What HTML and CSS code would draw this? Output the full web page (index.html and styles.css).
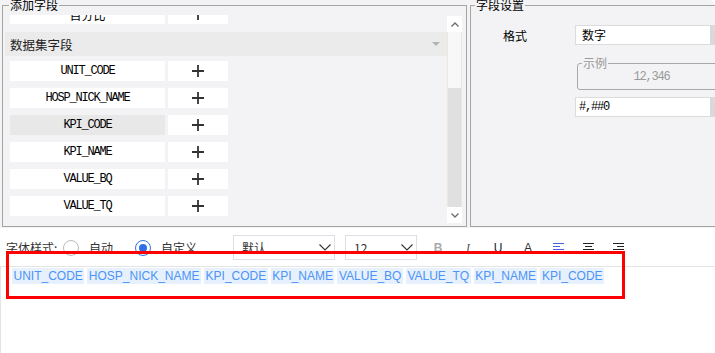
FILE: index.html
```html
<!DOCTYPE html>
<html lang="zh-CN">
<head>
    <meta charset="UTF-8">
    <meta name="viewport" content="width=device-width, initial-scale=1.0">
    <title>字段设置</title>
    <link rel="stylesheet" href="styles.css">
</head>
<body>
    <div class="top">
        <fieldset class="panel panel-fields">
            <legend>添加字段</legend>
            <div class="list">
                <div class="list-view">
                    <div class="list-inner">
                        <div class="field-row">
                            <span class="field-name field-name-cjk">百分比</span>
                            <span class="field-add"><svg width="12" height="12" viewBox="0 0 12 12"><path d="M6 0V12M0 6H12" stroke="#333" stroke-width="1.8"/></svg></span>
                        </div>
                        <div class="group-head">数据集字段<span class="caret"></span></div>
                        <div class="field-row">
                            <span class="field-name">UNIT_CODE</span>
                            <span class="field-add"><svg width="12" height="12" viewBox="0 0 12 12"><path d="M6 0V12M0 6H12" stroke="#333" stroke-width="1.8"/></svg></span>
                        </div>
                        <div class="field-row">
                            <span class="field-name">HOSP_NICK_NAME</span>
                            <span class="field-add"><svg width="12" height="12" viewBox="0 0 12 12"><path d="M6 0V12M0 6H12" stroke="#333" stroke-width="1.8"/></svg></span>
                        </div>
                        <div class="field-row is-hover">
                            <span class="field-name">KPI_CODE</span>
                            <span class="field-add"><svg width="12" height="12" viewBox="0 0 12 12"><path d="M6 0V12M0 6H12" stroke="#333" stroke-width="1.8"/></svg></span>
                        </div>
                        <div class="field-row">
                            <span class="field-name">KPI_NAME</span>
                            <span class="field-add"><svg width="12" height="12" viewBox="0 0 12 12"><path d="M6 0V12M0 6H12" stroke="#333" stroke-width="1.8"/></svg></span>
                        </div>
                        <div class="field-row">
                            <span class="field-name">VALUE_BQ</span>
                            <span class="field-add"><svg width="12" height="12" viewBox="0 0 12 12"><path d="M6 0V12M0 6H12" stroke="#333" stroke-width="1.8"/></svg></span>
                        </div>
                        <div class="field-row">
                            <span class="field-name">VALUE_TQ</span>
                            <span class="field-add"><svg width="12" height="12" viewBox="0 0 12 12"><path d="M6 0V12M0 6H12" stroke="#333" stroke-width="1.8"/></svg></span>
                        </div>
                    </div>
                </div>
                <div class="scrollbar">
                    <div class="sb-btn"><svg width="8" height="5" viewBox="0 0 8 5"><path d="M0.5 4.5L4 1L7.5 4.5" fill="none" stroke="#707070" stroke-width="1.4"/></svg></div>
                    <div class="sb-track"><div class="sb-thumb"></div></div>
                    <div class="sb-btn"><svg width="8" height="5" viewBox="0 0 8 5"><path d="M0.5 0.5L4 4L7.5 0.5" fill="none" stroke="#707070" stroke-width="1.4"/></svg></div>
                </div>
            </div>
        </fieldset>

        <fieldset class="panel panel-settings">
            <legend>字段设置</legend>
            <div class="setting-row">
                <label class="setting-label">格式</label>
                <div class="combo">
                    <span class="combo-value">数字</span>
                    <span class="combo-btn"></span>
                </div>
            </div>
            <fieldset class="sample">
                <legend>示例</legend>
                <div class="sample-value">12,346</div>
            </fieldset>
            <div class="combo pattern">
                <span class="combo-value mono">#,##0</span>
                <span class="combo-btn"></span>
            </div>
        </fieldset>
    </div>

    <div class="toolbar">
        <span class="tb-label">字体样式:</span>
        <span class="radio"></span>
        <span class="radio-text">自动</span>
        <span class="radio is-checked"></span>
        <span class="radio-text">自定义</span>
        <div class="tb-select tb-select-font">
            <span>默认</span>
            <svg width="12" height="7" viewBox="0 0 12 7"><path d="M0.5 0.5L6 6L11.5 0.5" fill="none" stroke="#333" stroke-width="1.1"/></svg>
        </div>
        <div class="tb-select tb-select-size">
            <span>12</span>
            <svg width="12" height="7" viewBox="0 0 12 7"><path d="M0.5 0.5L6 6L11.5 0.5" fill="none" stroke="#333" stroke-width="1.1"/></svg>
        </div>
        <span class="tb-icon icon-bold">B</span>
        <span class="tb-icon icon-italic">I</span>
        <span class="tb-icon icon-underline">U</span>
        <span class="tb-icon icon-color">A</span>
        <span class="tb-icon"><svg width="11" height="11" viewBox="0 0 11 11"><path d="M0 1.5H11M0 4.5H7M0 7.5H11M0 10.5H7" stroke="#4a5ee0" stroke-width="1.2"/></svg></span>
        <span class="tb-icon"><svg width="11" height="11" viewBox="0 0 11 11"><path d="M0 1.5H11M2 4.5H9M0 7.5H11M2 10.5H9" stroke="#222" stroke-width="1.2"/></svg></span>
        <span class="tb-icon"><svg width="11" height="11" viewBox="0 0 11 11"><path d="M0 1.5H11M4 4.5H11M0 7.5H11M4 10.5H11" stroke="#222" stroke-width="1.2"/></svg></span>
    </div>

    <div class="editor">
        <span class="tag">UNIT_CODE</span>
        <span class="tag">HOSP_NICK_NAME</span>
        <span class="tag">KPI_CODE</span>
        <span class="tag">KPI_NAME</span>
        <span class="tag">VALUE_BQ</span>
        <span class="tag">VALUE_TQ</span>
        <span class="tag">KPI_NAME</span>
        <span class="tag">KPI_CODE</span>
    </div>

    <div class="highlight"></div>
</body>
</html>
```

FILE: styles.css
```css
* {
    margin: 0;
    padding: 0;
    box-sizing: border-box;
}

body {
    position: relative;
    width: 715px;
    height: 353px;
    overflow: hidden;
    background-color: #fff;
    font-family: "Noto Sans CJK SC", "Liberation Sans", sans-serif;
    font-size: 12px;
    color: #000;
}

.mono {
    font-family: "Liberation Mono", "DejaVu Sans Mono", monospace;
    font-size: 12px;
    letter-spacing: -1.2px;
}

/* top area with two panels */
.top {
    display: flex;
    align-items: flex-start;
    gap: 3px;
    height: 228px;
    padding-left: 2px;
    background-color: #f3f3f5;
    overflow: hidden;
    border-top-right-radius: 6px;
}

.panel {
    flex-shrink: 0;
    min-width: 0;
    border: 1px solid #a5a5a0;
}

.panel > legend {
    margin-left: 4px;
    padding: 0 1px;
    font-size: 12px;
    line-height: 10px;
}

.panel-fields {
    width: 465px;
    padding: 5px 4px 3px 2px;
}

.list {
    display: flex;
    height: 208px;
}

.list-view {
    width: 442px;
    overflow: hidden;
}

.list-inner {
    margin-top: -11px;
}

.field-row {
    display: flex;
    gap: 3px;
    padding-left: 5px;
    margin-bottom: 7px;
}

.field-name {
    display: flex;
    align-items: center;
    justify-content: center;
    width: 155px;
    height: 20px;
    background-color: #fff;
    font-family: "Liberation Mono", "DejaVu Sans Mono", monospace;
    font-size: 12px;
    letter-spacing: -1.2px;
    color: #000;
}

.field-name-cjk {
    font-family: "Noto Sans CJK SC", sans-serif;
    letter-spacing: 0;
}

.is-hover .field-name {
    background-color: #e8e8e8;
}

.field-add {
    display: flex;
    align-items: center;
    justify-content: center;
    width: 60px;
    height: 20px;
    background-color: #fff;
}

.group-head {
    display: flex;
    align-items: center;
    height: 24px;
    margin: 8px 0 5px;
    padding: 0 7px 0 5px;
    background-color: #ebebeb;
    font-size: 12.5px;
    color: #222;
}

.caret {
    margin-left: auto;
    border-left: 4px solid transparent;
    border-right: 4px solid transparent;
    border-top: 4px solid #b3b3b3;
}

.scrollbar {
    display: flex;
    flex-direction: column;
    width: 15px;
    padding-top: 1px;
}

.sb-btn {
    display: flex;
    align-items: center;
    justify-content: center;
    height: 16px;
    background-color: #fff;
}

.sb-track {
    flex: 1;
    padding-top: 56px;
    background-color: #f8f8f8;
    border-left: 1px solid #efe7da;
    border-right: 1px solid #efe7da;
}

.sb-thumb {
    height: 119px;
    background-color: #e0e0e0;
}

/* settings panel */
.panel-settings {
    width: 300px;
    height: 227px;
    padding: 0;
}

.setting-row {
    display: flex;
    align-items: center;
    margin-top: 15px;
    padding-left: 32px;
}

.setting-label {
    width: 72px;
}

.combo {
    display: flex;
    width: 150px;
    height: 20px;
    border: 1px solid #dcdcdc;
    background-color: #fff;
}

.combo-value {
    flex: 1;
    padding-left: 6px;
    line-height: 18px;
}

.combo-btn {
    width: 14px;
    background-color: #d9d9d9;
}

.sample {
    width: 149px;
    margin: 12px 0 0 106px;
    padding: 0 0 4px;
    border: 1px solid #a8a8a8;
    border-radius: 3px;
}

.sample legend {
    margin-left: 4px;
    padding: 0 1px;
    font-size: 12px;
    line-height: 12px;
    color: #999;
}

.sample-value {
    text-align: center;
    line-height: 16px;
    font-family: "Liberation Mono", "DejaVu Sans Mono", monospace;
    font-size: 12px;
    letter-spacing: -1.2px;
    color: #999;
}

.pattern {
    margin: 7px 0 0 104px;
}

.pattern .combo-value {
    padding-left: 3px;
}

/* font toolbar */
.toolbar {
    display: flex;
    align-items: center;
    height: 25px;
    margin-top: 7px;
    padding-left: 6px;
    color: #333;
}

.tb-label {
    width: 57px;
}

.radio {
    width: 16px;
    height: 16px;
    border: 1px solid #bbb;
    border-radius: 50%;
    background-color: #fff;
}

.radio.is-checked {
    display: flex;
    align-items: center;
    justify-content: center;
    margin-left: 22px;
    border-color: #2f72e8;
}

.radio.is-checked::after {
    content: "";
    width: 8px;
    height: 8px;
    border-radius: 50%;
    background-color: #2f6fe6;
}

.radio-text {
    margin-left: 10px;
}

.tb-select {
    display: flex;
    align-items: center;
    justify-content: space-between;
    height: 25px;
    padding: 0 3px 0 8px;
    border: 1px solid #dcdfe6;
    background-color: #fff;
}

.tb-select-font {
    width: 102px;
    margin-left: 36px;
}

.tb-select-size {
    width: 72px;
    margin-left: 10px;
}

.tb-icon {
    display: flex;
    align-items: center;
    justify-content: center;
    width: 16px;
    height: 16px;
    margin-left: 14px;
    font-family: "Liberation Sans", sans-serif;
    font-size: 12px;
    line-height: 16px;
}

.tb-select-size + .tb-icon {
    margin-left: 13px;
}

.icon-bold {
    font-weight: bold;
    color: #aaa;
}

.icon-italic {
    font-family: "Liberation Serif", serif;
    font-style: italic;
    color: #555;
}

.icon-underline {
    color: #223;
    text-decoration: underline;
    text-decoration-color: #7b3fc4;
}

.icon-color {
    color: #333;
    text-decoration: underline;
}

/* formula editor */
.editor {
    display: flex;
    flex-wrap: wrap;
    align-content: flex-start;
    gap: 3px;
    height: 87px;
    margin-top: 6px;
    padding: 1px 0 0 11px;
    border-top: 1px solid #e4e4e4;
    border-left: 1px solid #e4e4e4;
}

.tag {
    padding: 0 1.5px;
    line-height: 16px;
    background-color: #e7f0fd;
    color: #4b94f7;
    font-family: "Liberation Sans", sans-serif;
    font-size: 12px;
}

.highlight {
    position: absolute;
    left: 6px;
    top: 251px;
    width: 619px;
    height: 48px;
    border: 3px solid #f00;
}
```
